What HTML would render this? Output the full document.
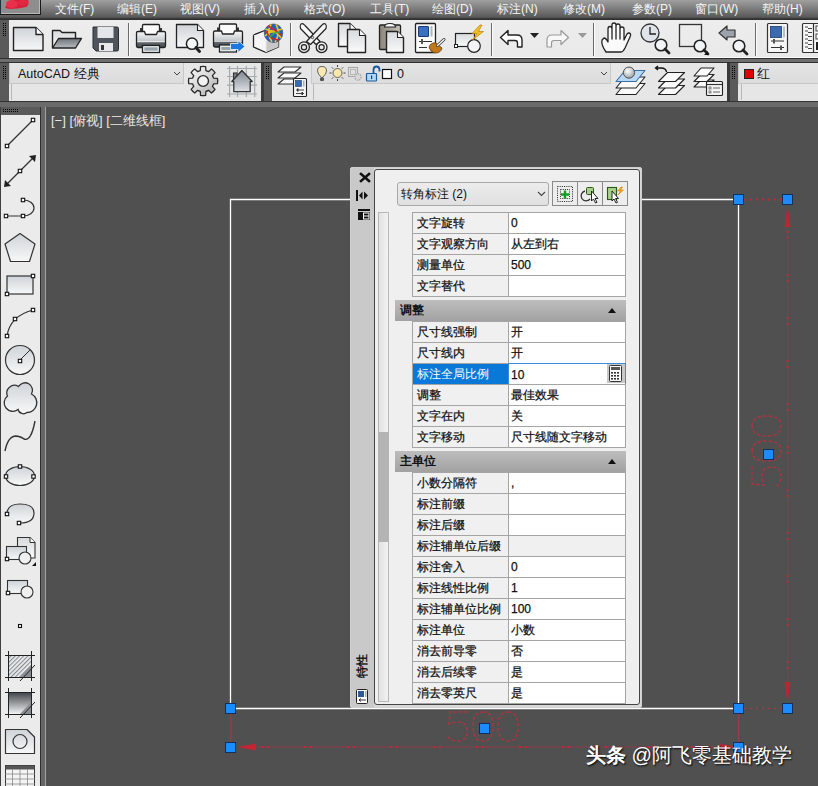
<!DOCTYPE html>
<html><head><meta charset="utf-8">
<style>
*{margin:0;padding:0;box-sizing:border-box}
html,body{width:818px;height:786px;overflow:hidden;background:#505050;font-family:"Liberation Sans",sans-serif;position:relative}
.a{position:absolute}
#menubar{left:0;top:0;width:818px;height:20px;background:linear-gradient(#a0a0a0,#5a5a5a 85%,#303030 95%,#303030)}
.mi{position:absolute;top:1px;color:#f4f4f4;font-size:12px;line-height:16px;white-space:nowrap}
#logo{left:0;top:0;width:41px;height:15px;border-right:1px solid #2a2a2a;border-bottom:1px solid #2a2a2a;background:linear-gradient(90deg,#5a6a70,#8a8a8a 60%,#7a7a7a)}
#tb1{left:0;top:20px;width:818px;height:38px;background:linear-gradient(#ededed,#e9e9e9);border-bottom:1px solid #fafafa}
#sep1{left:0;top:58px;width:818px;height:5px;background:#6e6e6e;border-top:1px solid #303030;border-bottom:1px solid #303030}
#tb2{left:0;top:63px;width:818px;height:38px;background:#e6e6e6}
#band{left:0;top:101px;width:818px;height:6px;background:#6a6a6a;border-top:1px solid #333}
.grip{position:absolute;background:#4a4a4a;background-image:radial-gradient(circle,#111 0.8px,transparent 1.1px);background-size:3px 3px}
.gap{position:absolute;background:#3a3a3a}
#lefttb{left:0;top:107px;width:41px;height:679px;background:#ebebeb;border-right:1px solid #2e2e2e;border-left:1px solid #404040}
#leftgrip{left:0;top:107px;width:41px;height:8px;background:#505050}
#canvasborder{left:41px;top:101px;width:777px;height:685px;background:#666}
#canvas{left:45px;top:106px;width:773px;height:680px;background:#505050;border-left:1px solid #a0a0a0;border-top:1px solid #a0a0a0}
#vlabel{left:51px;top:112px;color:#e8e8e8;font-size:13px;line-height:17px;white-space:nowrap}
.combo{position:absolute;height:21px;background:linear-gradient(#e4e4e4,#dcdcdc);border:1px solid #c8c8c8;border-top:none}
.combo2{position:absolute;height:16px;border-left:1px solid #b8b8b8;background:#e6e6e6}
.ctext{position:absolute;font-size:12.5px;line-height:16px;color:#111;white-space:nowrap}
/* panel */
#panel{left:350px;top:167px;width:292px;height:541px;background:#d8d8d8;border:1px solid #d0d0d0;border-radius:2px}
#pstrip{left:351px;top:168px;width:23px;height:539px;background:#c9c9c9;border-radius:3px 0 0 3px}
#pinner{left:374px;top:169px;width:266px;height:536px;background:#efefef;border:1px solid #444;border-radius:3px}
#combo{left:397px;top:182px;width:152px;height:24px;border:1px solid #a8a8a8;border-radius:3px;background:linear-gradient(#ececec,#e0e0e0);font-size:12px;line-height:22px;padding-left:3px;color:#111}
#btns{left:552px;top:181px;width:76px;height:25px;border:1px solid #9a9a9a;background:#ececec}
#scroll{left:378px;top:212px;width:11px;height:490px;background:linear-gradient(90deg,#e2e2e2,#f2f2f2);border:1px solid #b8b8b8}
#thumb{left:378px;top:432px;width:11px;height:110px;background:#b4b4b4}
#tbl{left:0;top:0;width:818px;height:704px;overflow:hidden}
.row{position:absolute;left:412px;width:214px;height:21px;border-top:1px solid #a5a5a5;border-left:1px solid #a5a5a5;border-right:1px solid #a5a5a5}
.rb{position:absolute;left:412px;width:214px;height:1px;background:#a5a5a5}
.k{position:absolute;left:0;top:0;width:96px;height:20px;background:#f0f0f0;border-right:1px solid #a5a5a5;font-size:12px;line-height:20px;padding-left:4px;color:#111;white-space:nowrap;-webkit-text-stroke:0.25px #111}
.v{position:absolute;left:96px;top:0;width:116px;height:20px;background:#fff;font-size:12px;line-height:20px;padding-left:2px;color:#111;white-space:nowrap;-webkit-text-stroke:0.25px #111}
.sel .k{background:#0a78d7;color:#fff;-webkit-text-stroke:0}
.sel .v{border:1px solid #3c8ad8;left:95px;width:118px;top:-1px;height:22px;line-height:23px;padding-left:2px}
.dis .v{background:#f0f0f0}
.hdr{position:absolute;left:395px;width:231px;height:21px;background:linear-gradient(#bdbdbd,#a2a2a2);font-size:12px;font-weight:bold;line-height:21px;padding-left:5px;color:#111}
.hdr:after{content:"";position:absolute;right:10px;top:8px;border-left:4px solid transparent;border-right:4px solid transparent;border-bottom:5px solid #111}
#wm{left:586px;top:742px;color:#fff;font-size:20.2px;line-height:26px;white-space:nowrap;text-shadow:1px 1px 2px #000}
</style></head><body>
<div id="canvasborder" class="a"></div>
<div id="canvas" class="a"></div>
<div id="vlabel" class="a">[−] [俯视] [二维线框]</div>


<div id="menubar" class="a"></div>
<div class="mi" style="left:55px">文件(F)</div>
<div class="mi" style="left:117px">编辑(E)</div>
<div class="mi" style="left:180px">视图(V)</div>
<div class="mi" style="left:244px">插入(I)</div>
<div class="mi" style="left:304px">格式(O)</div>
<div class="mi" style="left:370px">工具(T)</div>
<div class="mi" style="left:432px">绘图(D)</div>
<div class="mi" style="left:497px">标注(N)</div>
<div class="mi" style="left:563px">修改(M)</div>
<div class="mi" style="left:632px">参数(P)</div>
<div class="mi" style="left:695px">窗口(W)</div>
<div class="mi" style="left:762px">帮助(H)</div>

<div id="tb1" class="a"></div>
<div id="sep1" class="a"></div>
<div id="tb2" class="a"></div>
<div class="gap" style="left:261px;top:63px;width:3px;height:38px"></div>
<div class="gap" style="left:727px;top:63px;width:3px;height:38px"></div>
<div class="combo" style="left:9px;top:63px;width:175px"></div>
<div class="combo2" style="left:11px;top:84px;width:173px"></div>
<div class="ctext" style="left:18px;top:66px">AutoCAD 经典</div>
<div class="combo" style="left:311px;top:63px;width:300px"></div>
<div class="combo2" style="left:313px;top:84px;width:298px"></div>
<div class="ctext" style="left:397px;top:66px">0</div>
<div class="combo" style="left:738px;top:63px;width:81px"></div>
<div class="combo2" style="left:741px;top:84px;width:77px"></div>
<div class="ctext" style="left:757px;top:66px">红</div>
<div id="band" class="a"></div>
<div id="lefttb" class="a"></div>
<svg class="a" style="left:0;top:0" width="818" height="786" viewBox="0 0 818 786">
<defs>
<linearGradient id="gPage" x1="0" y1="0" x2="0" y2="1"><stop offset="0" stop-color="#cfd3d8"/><stop offset="1" stop-color="#f8f8f8"/></linearGradient>
<linearGradient id="gPage2" x1="0" y1="0" x2="0" y2="1"><stop offset="0" stop-color="#d8dadd"/><stop offset="1" stop-color="#fafafa"/></linearGradient>
<linearGradient id="gFold" x1="0" y1="0" x2="0" y2="1"><stop offset="0" stop-color="#6f747a"/><stop offset="1" stop-color="#b9bcc0"/></linearGradient>
<linearGradient id="gPrn" x1="0" y1="0" x2="0" y2="1"><stop offset="0" stop-color="#f8f8f8"/><stop offset="0.6" stop-color="#c4c8cc"/><stop offset="0.64" stop-color="#fafafa"/><stop offset="0.7" stop-color="#60656c"/><stop offset="1" stop-color="#484c54"/></linearGradient>
<linearGradient id="gHouse" x1="0" y1="0" x2="0" y2="1"><stop offset="0" stop-color="#7e858e"/><stop offset="1" stop-color="#dde0e4"/></linearGradient>
<linearGradient id="gGear" x1="0" y1="0" x2="1" y2="1"><stop offset="0" stop-color="#fcfcfc"/><stop offset="0.5" stop-color="#d8d8d8"/><stop offset="1" stop-color="#a8a8a8"/></linearGradient>
<linearGradient id="gGrad" x1="0" y1="0" x2="0" y2="1"><stop offset="0" stop-color="#3c4046"/><stop offset="1" stop-color="#f4f4f4"/></linearGradient>
<linearGradient id="gClip" x1="0" y1="0" x2="1" y2="0"><stop offset="0" stop-color="#8a8478"/><stop offset="1" stop-color="#c8c4bc"/></linearGradient>
<radialGradient id="gGlobe" cx="0.4" cy="0.4" r="0.6"><stop offset="0" stop-color="#f0d040"/><stop offset="0.5" stop-color="#30a040"/><stop offset="1" stop-color="#2050c0"/></radialGradient>
<radialGradient id="gBall" cx="0.4" cy="0.35" r="0.6"><stop offset="0" stop-color="#ffffff"/><stop offset="1" stop-color="#a8acb0"/></radialGradient>
<pattern id="hatch" width="3" height="3" patternUnits="userSpaceOnUse" patternTransform="rotate(45)"><rect width="3" height="3" fill="#f0f0f0"/><rect width="1.2" height="3" fill="#8a8e94"/></pattern>
</defs>
<rect x="0" y="20" width="9" height="38" fill="#5a5a5a"/>
<rect x="3" y="23" width="1" height="1" fill="#050505"/>
<rect x="3" y="25" width="1" height="1" fill="#050505"/>
<rect x="3" y="27" width="1" height="1" fill="#050505"/>
<rect x="3" y="29" width="1" height="1" fill="#050505"/>
<rect x="3" y="31" width="1" height="1" fill="#050505"/>
<rect x="3" y="33" width="1" height="1" fill="#050505"/>
<rect x="3" y="35" width="1" height="1" fill="#050505"/>
<rect x="5" y="23" width="1" height="1" fill="#050505"/>
<rect x="5" y="25" width="1" height="1" fill="#050505"/>
<rect x="5" y="27" width="1" height="1" fill="#050505"/>
<rect x="5" y="29" width="1" height="1" fill="#050505"/>
<rect x="5" y="31" width="1" height="1" fill="#050505"/>
<rect x="5" y="33" width="1" height="1" fill="#050505"/>
<rect x="5" y="35" width="1" height="1" fill="#050505"/>
<rect x="0" y="63" width="9" height="38" fill="#5a5a5a"/>
<rect x="3" y="66" width="1" height="1" fill="#050505"/>
<rect x="3" y="68" width="1" height="1" fill="#050505"/>
<rect x="3" y="70" width="1" height="1" fill="#050505"/>
<rect x="3" y="72" width="1" height="1" fill="#050505"/>
<rect x="3" y="74" width="1" height="1" fill="#050505"/>
<rect x="3" y="76" width="1" height="1" fill="#050505"/>
<rect x="3" y="78" width="1" height="1" fill="#050505"/>
<rect x="5" y="66" width="1" height="1" fill="#050505"/>
<rect x="5" y="68" width="1" height="1" fill="#050505"/>
<rect x="5" y="70" width="1" height="1" fill="#050505"/>
<rect x="5" y="72" width="1" height="1" fill="#050505"/>
<rect x="5" y="74" width="1" height="1" fill="#050505"/>
<rect x="5" y="76" width="1" height="1" fill="#050505"/>
<rect x="5" y="78" width="1" height="1" fill="#050505"/>
<rect x="264" y="63" width="8" height="38" fill="#5a5a5a"/>
<rect x="266" y="66" width="1" height="1" fill="#050505"/>
<rect x="266" y="68" width="1" height="1" fill="#050505"/>
<rect x="266" y="70" width="1" height="1" fill="#050505"/>
<rect x="266" y="72" width="1" height="1" fill="#050505"/>
<rect x="266" y="74" width="1" height="1" fill="#050505"/>
<rect x="266" y="76" width="1" height="1" fill="#050505"/>
<rect x="266" y="78" width="1" height="1" fill="#050505"/>
<rect x="268" y="66" width="1" height="1" fill="#050505"/>
<rect x="268" y="68" width="1" height="1" fill="#050505"/>
<rect x="268" y="70" width="1" height="1" fill="#050505"/>
<rect x="268" y="72" width="1" height="1" fill="#050505"/>
<rect x="268" y="74" width="1" height="1" fill="#050505"/>
<rect x="268" y="76" width="1" height="1" fill="#050505"/>
<rect x="268" y="78" width="1" height="1" fill="#050505"/>
<rect x="730" y="63" width="8" height="38" fill="#5a5a5a"/>
<rect x="732" y="66" width="1" height="1" fill="#050505"/>
<rect x="732" y="68" width="1" height="1" fill="#050505"/>
<rect x="732" y="70" width="1" height="1" fill="#050505"/>
<rect x="732" y="72" width="1" height="1" fill="#050505"/>
<rect x="732" y="74" width="1" height="1" fill="#050505"/>
<rect x="732" y="76" width="1" height="1" fill="#050505"/>
<rect x="732" y="78" width="1" height="1" fill="#050505"/>
<rect x="734" y="66" width="1" height="1" fill="#050505"/>
<rect x="734" y="68" width="1" height="1" fill="#050505"/>
<rect x="734" y="70" width="1" height="1" fill="#050505"/>
<rect x="734" y="72" width="1" height="1" fill="#050505"/>
<rect x="734" y="74" width="1" height="1" fill="#050505"/>
<rect x="734" y="76" width="1" height="1" fill="#050505"/>
<rect x="734" y="78" width="1" height="1" fill="#050505"/>
<rect x="1" y="107" width="39" height="8" fill="#5a5a5a"/>
<rect x="3" y="109" width="1" height="1" fill="#050505"/>
<rect x="3" y="111" width="1" height="1" fill="#050505"/>
<rect x="5" y="109" width="1" height="1" fill="#050505"/>
<rect x="5" y="111" width="1" height="1" fill="#050505"/>
<rect x="7" y="109" width="1" height="1" fill="#050505"/>
<rect x="7" y="111" width="1" height="1" fill="#050505"/>
<rect x="9" y="109" width="1" height="1" fill="#050505"/>
<rect x="9" y="111" width="1" height="1" fill="#050505"/>
<rect x="11" y="109" width="1" height="1" fill="#050505"/>
<rect x="11" y="111" width="1" height="1" fill="#050505"/>
<rect x="13" y="109" width="1" height="1" fill="#050505"/>
<rect x="13" y="111" width="1" height="1" fill="#050505"/>
<rect x="15" y="109" width="1" height="1" fill="#050505"/>
<rect x="15" y="111" width="1" height="1" fill="#050505"/>
<rect x="17" y="109" width="1" height="1" fill="#050505"/>
<rect x="17" y="111" width="1" height="1" fill="#050505"/>
<rect x="0" y="0" width="41" height="15" fill="#1a1a1a"/><rect x="0" y="0" width="40" height="14" fill="#b8b8b8"/><rect x="1" y="0" width="38" height="13" fill="#8e8e8e"/>
<path d="M5,8 Q7,2 14,0 H28 Q30,4 26,7 Q18,9 10,9 Z" fill="#d8203a"/><ellipse cx="12" cy="4" rx="6" ry="4" fill="#e8304a"/><ellipse cx="23" cy="2.5" rx="5" ry="3" fill="#e02840"/>
<rect x="0" y="0" width="1" height="14" fill="#203040"/>
<rect x="128" y="23" width="1" height="33" fill="#6a6a6a"/><rect x="129" y="23" width="1" height="33" fill="#fcfcfc"/>
<rect x="290" y="23" width="1" height="33" fill="#6a6a6a"/><rect x="291" y="23" width="1" height="33" fill="#fcfcfc"/>
<rect x="491" y="23" width="1" height="33" fill="#6a6a6a"/><rect x="492" y="23" width="1" height="33" fill="#fcfcfc"/>
<rect x="593" y="23" width="1" height="33" fill="#6a6a6a"/><rect x="594" y="23" width="1" height="33" fill="#fcfcfc"/>
<rect x="755" y="23" width="1" height="33" fill="#6a6a6a"/><rect x="756" y="23" width="1" height="33" fill="#fcfcfc"/>
<path d="M13.5,27.5 H36 L43,34.5 V50.5 H13.5 Z" fill="url(#gPage)" stroke="#222" stroke-width="1.4" stroke-linejoin="round"/>
<path d="M36,27.5 V34.5 H43" fill="#fff" stroke="#222" stroke-width="1.4" stroke-linejoin="round"/>
<path d="M52.5,48 V30.5 H60 L62,32.5 H75.5 V40" fill="url(#gPage2)" stroke="#222" stroke-width="1.4" stroke-linejoin="round"/>
<path d="M52.5,48 L58.5,38.5 H81.5 L75.5,48 Z" fill="url(#gFold)" stroke="#222" stroke-width="1.4" stroke-linejoin="round"/>
<path d="M93,27 H117 Q118.5,27 118.5,28.5 V49.5 Q118.5,51 117,51 H96 L93,48 Z" fill="#50545c" stroke="#2a2d33" stroke-width="1"/>
<rect x="97.5" y="27" width="16" height="11" fill="#e4e6ea"/>
<rect x="99" y="43" width="14" height="8" fill="#e8e8ea"/><rect x="101" y="45" width="3" height="5" fill="#333"/>
<rect x="142.5" y="24.5" width="17" height="11" rx="1" fill="#fbfbfb" stroke="#222" stroke-width="1.3"/>
<rect x="140" y="28" width="2.5" height="4" fill="#333"/><rect x="159.5" y="28" width="2.5" height="4" fill="#333"/>
<path d="M136.5,33 Q136.5,31.5 138,31.5 H144.5 L145.5,34.5 H156.5 L157.5,31.5 H164 Q165.5,31.5 165.5,33 V46 Q165.5,47.5 164,47.5 H138 Q136.5,47.5 136.5,46 Z" fill="url(#gPrn)" stroke="#222" stroke-width="1.3" stroke-linejoin="round"/>
<rect x="142.5" y="45.5" width="17" height="7" fill="#9aa4ac" stroke="#222" stroke-width="1.3"/><rect x="143.8" y="46.8" width="14.4" height="4.4" fill="none" stroke="#f4f8fa" stroke-width="1"/>
<path d="M176.5,24.5 H197.5 L203.5,30.5 V47.5 H176.5 Z" fill="url(#gPage)" stroke="#222" stroke-width="1.3" stroke-linejoin="round"/>
<path d="M197.5,24.5 V30.5 H203.5" fill="#f4f4f4" stroke="#222" stroke-width="1.1"/>
<circle cx="192" cy="43.7" r="5.6" fill="#f6f8f8" stroke="#222" stroke-width="1.5"/><path d="M196,47.7 L199.5,51.5" stroke="#222" stroke-width="3" stroke-linecap="round"/>
<rect x="219.5" y="24.0" width="17" height="11" rx="1" fill="#fbfbfb" stroke="#222" stroke-width="1.3"/>
<rect x="217" y="27.5" width="2.5" height="4" fill="#333"/><rect x="236.5" y="27.5" width="2.5" height="4" fill="#333"/>
<path d="M213.5,32.5 Q213.5,31.0 215,31.0 H221.5 L222.5,34.0 H233.5 L234.5,31.0 H241 Q242.5,31.0 242.5,32.5 V45.5 Q242.5,47.0 241,47.0 H215 Q213.5,47.0 213.5,45.5 Z" fill="url(#gPrn)" stroke="#222" stroke-width="1.3" stroke-linejoin="round"/>
<rect x="219.5" y="45.0" width="17" height="7" fill="#9aa4ac" stroke="#222" stroke-width="1.3"/><rect x="220.8" y="46.3" width="14.4" height="4.4" fill="none" stroke="#f4f8fa" stroke-width="1"/>
<path d="M230.5,43.5 H238 V40.5 L245,46.5 L238,52.5 V49.5 H230.5 Z" fill="#1a78e0" stroke="#f4f8ff" stroke-width="0.8"/>
<path d="M253.5,35 L266,30 L278.5,35 V47 L266,52.5 L253.5,47 Z" fill="#f6f6f6" stroke="#222" stroke-width="1.3" stroke-linejoin="round"/><path d="M266,41 V52 L278.5,47 V35 Z" fill="#c8c8c8"/><path d="M253.5,35 L266,41 V52.5 M266,41 L278.5,35" fill="none" stroke="#eee" stroke-width="0.8"/>
<circle cx="273.5" cy="33.2" r="9.3" fill="#1e60c8" stroke="#3a4a60" stroke-width="0.6"/>
<path d="M265.5,29 Q272,33 282,29 M265,36 Q274,27 281,38 M271,24.5 Q266,33 272,42 M276,24.5 Q281,33 275,42" fill="none" stroke="#e8c020" stroke-width="1.7"/>
<path d="M266,31 Q270,40 279,40 M268,26 Q276,30 281,35" fill="none" stroke="#d02828" stroke-width="1.5"/><path d="M270,37 Q274,32 280,32" fill="none" stroke="#30b040" stroke-width="1.4"/>
<path d="M301,24 Q303,23 305,25.5 L320,41.5 L316,44.5 L300.5,28.5 Q299.5,26 301,24 Z" fill="#fafafa" stroke="#222" stroke-width="1.2" stroke-linejoin="round"/>
<path d="M325.5,24 Q323.5,23 321.5,25.5 L306.5,41.5 L310.5,44.5 L326,28.5 Q327,26 325.5,24 Z" fill="#f2f2f2" stroke="#222" stroke-width="1.2" stroke-linejoin="round"/>
<circle cx="304" cy="47.2" r="5.4" fill="#f0f0f0" stroke="#222" stroke-width="1.3"/><circle cx="304" cy="47.2" r="2.6" fill="#e8e8e8" stroke="#222" stroke-width="1.2"/>
<circle cx="321.6" cy="47.2" r="5.4" fill="#f0f0f0" stroke="#222" stroke-width="1.3"/><circle cx="321.6" cy="47.2" r="2.6" fill="#e8e8e8" stroke="#222" stroke-width="1.2"/>
<circle cx="312.5" cy="37.5" r="1.2" fill="none" stroke="#333" stroke-width="0.9"/>
<path d="M338.5,23.5 H350 L356,29.5 V46.5 H338.5 Z" fill="url(#gPage2)" stroke="#222" stroke-width="1.4" stroke-linejoin="round"/>
<path d="M350,23.5 V29.5 H356" fill="#fff" stroke="#222" stroke-width="1.1"/>
<path d="M347.5,29.5 H359.5 L365.5,35.5 V52.5 H347.5 Z" fill="url(#gPage2)" stroke="#222" stroke-width="1.4" stroke-linejoin="round"/>
<path d="M359.5,29.5 V35.5 H365.5" fill="#fff" stroke="#222" stroke-width="1.1"/>
<rect x="379.5" y="25" width="21" height="24.5" rx="1" fill="url(#gClip)" stroke="#222" stroke-width="1.3"/>
<path d="M384.5,27 Q384.5,23.5 390,23.5 Q395.5,23.5 395.5,27 Z" fill="#fafafa" stroke="#222" stroke-width="1.1"/>
<path d="M386.5,31.5 H397.5 L403.5,37.5 V52.5 H386.5 Z" fill="url(#gPage2)" stroke="#222" stroke-width="1.4" stroke-linejoin="round"/>
<path d="M397.5,31.5 V37.5 H403.5" fill="#fff" stroke="#222" stroke-width="1.1"/>
<rect x="415.5" y="23.5" width="20" height="29" rx="1" fill="#fbfbfb" stroke="#222" stroke-width="1.3"/>
<rect x="418.5" y="26.5" width="10" height="10" rx="0.5" fill="#3a70c0" stroke="#1a3a78" stroke-width="1"/><rect x="430.5" y="26" width="2" height="10.5" fill="#b0b6c0"/>
<path d="M419,41.5 H432 M419,47.5 H427" stroke="#333" stroke-width="1.2"/><rect x="421" y="39" width="2" height="5" fill="#555"/>
<path d="M429,47 Q431,42 436,43 L442,48 Q441,53 435,53 Q430,52 429,47 Z" fill="#c07818" stroke="#6a4010" stroke-width="0.8"/><path d="M437.5,45.5 L444,39.5" stroke="#333" stroke-width="3" stroke-linecap="round"/><path d="M437.5,45.5 L444,39.5" stroke="#fafafa" stroke-width="1.4" stroke-linecap="round"/>
<rect x="455.5" y="33.5" width="19" height="13" fill="url(#gPage2)" stroke="#222" stroke-width="1.2"/><rect x="454.5" y="44.5" width="3" height="3" fill="#fff" stroke="#222" stroke-width="1"/>
<circle cx="474" cy="46" r="6.3" fill="#f4f4f6" stroke="#222" stroke-width="1.2"/>
<path d="M480,25 L472,33.5 H477 L472.5,40 L483.5,31.5 H478.5 L482,25 Z" fill="#f0c020" stroke="#c08010" stroke-width="0.7" stroke-linejoin="round"/>
<path d="M508,30.5 L500.5,37.5 L508,44.5 V40.5 H515 Q517.5,40.5 517.5,43 V47 H522 V40 Q522,35 517,35 H508 Z" fill="#fff" stroke="#222" stroke-width="1.4" stroke-linejoin="round"/>
<path d="M530,33 H539 L534.5,38 Z" fill="#222"/>
<path d="M561,30.5 L568.5,37.5 L561,44.5 V40.5 H554 Q551.5,40.5 551.5,43 V47 H547 V40 Q547,35 552,35 H561 Z" fill="#f8f8f8" stroke="#9a9a9a" stroke-width="1.2" stroke-linejoin="round"/>
<path d="M578,33 H587 L582.5,38 Z" fill="#9a9a9a"/>
<path d="M606,52 Q601,45 602,40 L604,38 Q606,38 608,42 V29 Q608,26.5 610,26.5 Q612,26.5 612,29 V39 V25 Q612,23 614,23 Q616,23 616,25 V39 V26 Q616,24 618,24 Q620,24 620,26 V39 V29 Q620,27 622,27 Q624,27 624,29 V40 L627,34 Q629,32 630.5,34 Q631,35 630,37 L625,48 Q623,52 621,52 Z" fill="#fafafa" stroke="#222" stroke-width="1.3" stroke-linejoin="round"/>
<circle cx="650" cy="33" r="9" fill="#dfe3ea" stroke="#333" stroke-width="1.3"/><path d="M650,27 V34 H656" fill="none" stroke="#222" stroke-width="1.3"/>
<circle cx="661" cy="45" r="5.8" fill="#f2f4f6" stroke="#222" stroke-width="1.6"/><path d="M665,49 L669,53" stroke="#222" stroke-width="2.8" stroke-linecap="round"/>
<rect x="679.5" y="24.5" width="22" height="22" fill="none" stroke="#333" stroke-width="1.3"/>
<circle cx="700" cy="46" r="5.8" fill="#f2f4f6" stroke="#222" stroke-width="1.6"/><path d="M704,50 L708,54" stroke="#222" stroke-width="2.8" stroke-linecap="round"/>
<path d="M708,51 V55 H704 Z" fill="#111"/>
<path d="M719,33 L727,26 V30 H735 V37 H727 V40 Z" fill="#9ca2ac" stroke="#333" stroke-width="1.2" stroke-linejoin="round"/>
<circle cx="739" cy="46" r="5.8" fill="#f2f4f6" stroke="#222" stroke-width="1.6"/><path d="M743,50 L747,54" stroke="#222" stroke-width="2.8" stroke-linecap="round"/>
<rect x="767.5" y="23.5" width="20" height="29" rx="1" fill="#f6f6f6" stroke="#333" stroke-width="1.2"/>
<rect x="770.5" y="26.5" width="11" height="11" fill="#3a6ab0" stroke="#1a3a70" stroke-width="0.8"/><rect x="783" y="26.5" width="2" height="11" fill="#b8bcc4"/>
<path d="M771,41 H784 M771,47.5 H784" stroke="#333" stroke-width="1"/><rect x="773" y="39" width="2" height="4.5" fill="#555"/><rect x="780" y="45.5" width="2" height="4.5" fill="#555"/>
<rect x="802.5" y="23.5" width="20" height="29" rx="1" fill="#f6f6f6" stroke="#333" stroke-width="1.2"/><path d="M813.5,23.5 V52.5" stroke="#333" stroke-width="1.2"/>
<path d="M805,27 H808 M808,28.5 H812" stroke="#444" stroke-width="1"/>
<path d="M805,31 H808 M808,32.5 H812" stroke="#444" stroke-width="1"/>
<path d="M805,35 H808 M808,36.5 H812" stroke="#444" stroke-width="1"/>
<path d="M805,39 H808 M808,40.5 H812" stroke="#444" stroke-width="1"/>
<path d="M805,43 H808 M808,44.5 H812" stroke="#444" stroke-width="1"/>
<path d="M805,47 H808 M808,48.5 H812" stroke="#444" stroke-width="1"/>
<rect x="816" y="26" width="4" height="5" fill="none" stroke="#444" stroke-width="1"/><rect x="816" y="34" width="4" height="5" fill="none" stroke="#444" stroke-width="1"/><rect x="816" y="42" width="4" height="8" fill="#222"/>
<path d="M174,72 L177,75 L180,72" fill="none" stroke="#444" stroke-width="1"/>
<path d="M200.30,70.57 L200.56,66.62 A14.6,14.6 0 0 1 205.64,66.62 L205.90,70.57 A10.8,10.8 0 0 1 208.50,71.65 L211.47,69.04 A14.6,14.6 0 0 1 215.06,72.63 L212.45,75.60 A10.8,10.8 0 0 1 213.53,78.20 L217.48,78.46 A14.6,14.6 0 0 1 217.48,83.54 L213.53,83.80 A10.8,10.8 0 0 1 212.45,86.40 L215.06,89.37 A14.6,14.6 0 0 1 211.47,92.96 L208.50,90.35 A10.8,10.8 0 0 1 205.90,91.43 L205.64,95.38 A14.6,14.6 0 0 1 200.56,95.38 L200.30,91.43 A10.8,10.8 0 0 1 197.70,90.35 L194.73,92.96 A14.6,14.6 0 0 1 191.14,89.37 L193.75,86.40 A10.8,10.8 0 0 1 192.67,83.80 L188.72,83.54 A14.6,14.6 0 0 1 188.72,78.46 L192.67,78.20 A10.8,10.8 0 0 1 193.75,75.60 L191.14,72.63 A14.6,14.6 0 0 1 194.73,69.04 L197.70,71.65 A10.8,10.8 0 0 1 200.30,70.57 Z" fill="url(#gGear)" stroke="#2a2a2a" stroke-width="1.3" stroke-linejoin="round"/>
<circle cx="203.1" cy="81" r="5.4" fill="#f2f2f2" stroke="#2a2a2a" stroke-width="1.4"/>
<path d="M227,68.5 H257 M227,76.5 H257 M227,85.2 H257 M227,94 H257 M229.6,66 V97 M237.5,66 V97 M246.3,66 V97 M254.7,66 V97" stroke="#a4aab0" stroke-width="1.2"/>
<rect x="233.5" y="73" width="3.5" height="7" fill="#7a8088" stroke="#333" stroke-width="1.1"/>
<path d="M233.8,91.7 V81.5 H231.8 L241.9,70.5 L252.2,81.5 H250.2 V91.7 Z" fill="url(#gHouse)" stroke="#333" stroke-width="1.3" stroke-linejoin="round"/>
<path d="M284,67 H301 L295,72 H278 Z" fill="#fafafa" stroke="#333" stroke-width="1.1" stroke-linejoin="round"/>
<path d="M284,73 H301 L295,78 H278 Z" fill="#fafafa" stroke="#333" stroke-width="1.1" stroke-linejoin="round"/>
<path d="M284,79 H301 L295,84 H278 Z" fill="#fafafa" stroke="#333" stroke-width="1.1" stroke-linejoin="round"/>
<rect x="293.5" y="78.5" width="13" height="18" rx="1" fill="#f6f6f6" stroke="#222" stroke-width="1.1"/><rect x="295.5" y="80.5" width="6" height="6" fill="#3a6ab0" stroke="#1a3a70" stroke-width="0.6"/><rect x="303" y="80.5" width="1.5" height="6" fill="#aab"/><path d="M296,90 H304 M296,93.5 H304" stroke="#333" stroke-width="0.9"/><rect x="297" y="88.5" width="1.5" height="3" fill="#333"/><rect x="301.5" y="92" width="1.5" height="3" fill="#333"/>
<path d="M322,78 Q317.5,74 317.5,71 Q317.5,66.5 322,66.5 Q326.5,66.5 326.5,71 Q326.5,74 322,78 Z" fill="#faeab0" stroke="#555" stroke-width="0.9"/><rect x="320" y="77.5" width="4" height="3.5" rx="1" fill="#555"/>
<circle cx="337.5" cy="73" r="4.5" fill="#f8e8a8" stroke="#555" stroke-width="0.9"/><path d="M337.5,65 V67 M337.5,79 V81 M329.5,73 H331.5 M343.5,73 H345.5 M331.8,67.3 L333.2,68.7 M341.8,77.3 L343.2,78.7 M343.2,67.3 L341.8,68.7 M333.2,77.3 L331.8,78.7" stroke="#444" stroke-width="1"/>
<rect x="348.5" y="67.5" width="9" height="9" fill="none" stroke="#a8a8a8" stroke-width="1.1"/><rect x="350.5" y="69.5" width="5" height="5" fill="none" stroke="#b8b8b8" stroke-width="1"/><circle cx="358" cy="77" r="3.2" fill="#d8d8d8" stroke="#b0b0b0" stroke-width="1.6" stroke-dasharray="1.4 1"/>
<rect x="366.5" y="73.5" width="10" height="7.5" rx="0.8" fill="#b0d8f8" stroke="#1a5a9a" stroke-width="1.2"/><path d="M373.5,73 V70 Q373.5,66.5 376.5,66.5 Q379.5,66.5 379.5,70 V71.5" fill="none" stroke="#1a5a9a" stroke-width="1.8"/><rect x="371" y="75.5" width="1.2" height="3.5" fill="#1a3a6a"/>
<rect x="382.5" y="69.5" width="9" height="9" fill="#fff" stroke="#111" stroke-width="1.2"/>
<path d="M601,72 L604,75 L607,72" fill="none" stroke="#444" stroke-width="1"/>
<path d="M616,94.5 H636 L645,83.5 H625 Z" fill="#fafafa" stroke="#222" stroke-width="1.1" stroke-linejoin="round"/>
<path d="M616,88 H636 L645,77 H625 Z" fill="#fafafa" stroke="#222" stroke-width="1.1" stroke-linejoin="round"/>
<path d="M616,81.5 H636 L645,70.5 H625 Z" fill="#b8d8f4" stroke="#3a70a8" stroke-width="1.1" stroke-linejoin="round"/>
<circle cx="629" cy="72.6" r="5.6" fill="url(#gBall)" stroke="#444" stroke-width="0.9"/>
<path d="M658.5,94.5 H675.5 L684.5,85.5 H667.5 Z" fill="#fafafa" stroke="#222" stroke-width="1.1" stroke-linejoin="round"/>
<path d="M658.5,88 H675.5 L684.5,79 H667.5 Z" fill="#fafafa" stroke="#222" stroke-width="1.1" stroke-linejoin="round"/>
<path d="M658.5,81.5 H675.5 L684.5,72.5 H667.5 Z" fill="#fafafa" stroke="#222" stroke-width="1.1" stroke-linejoin="round"/>
<path d="M666.5,72 Q666,68 661,68 H656 M658,66 L655.5,68 L658,70" fill="none" stroke="#111" stroke-width="1.3"/>
<path d="M694,87 H707 L714,80 H701 Z" fill="#fafafa" stroke="#222" stroke-width="1.1" stroke-linejoin="round"/>
<path d="M694,81.5 H707 L714,74.5 H701 Z" fill="#fafafa" stroke="#222" stroke-width="1.1" stroke-linejoin="round"/>
<path d="M694,76 H707 L714,68 H701 Z" fill="#fafafa" stroke="#222" stroke-width="1.1" stroke-linejoin="round"/>
<rect x="706.5" y="81.5" width="16" height="14" rx="1" fill="#f4f4f4" stroke="#222" stroke-width="1.1"/><path d="M707,84.5 H722" stroke="#333" stroke-width="1.1"/><rect x="709" y="87" width="2" height="2" fill="none" stroke="#555" stroke-width="0.7"/><rect x="709" y="91" width="2" height="2" fill="none" stroke="#555" stroke-width="0.7"/><path d="M713,88 H720 M713,92 H720" stroke="#555" stroke-width="0.9"/>
<rect x="744.5" y="69.5" width="9" height="9" fill="#e00000" stroke="#222" stroke-width="1"/><path d="M7,146 L33,120" stroke="#333" stroke-width="1.2" fill="none"/>
<rect x="5.3" y="144.3" width="3.4" height="3.4" fill="#fff" stroke="#111" stroke-width="1.1"/>
<rect x="31.3" y="118.3" width="3.4" height="3.4" fill="#fff" stroke="#111" stroke-width="1.1"/>
<path d="M6,185 L34,157" stroke="#333" stroke-width="1.2" fill="none"/>
<path d="M4,187 L5,180 L11,186 Z M36,155 L35,162 L29,156 Z" fill="#222"/>
<rect x="18.3" y="169.3" width="3.4" height="3.4" fill="#fff" stroke="#111" stroke-width="1.1"/>
<path d="M6,216 H23 A11,8 0 0 0 23,200" stroke="#333" stroke-width="1.2" fill="none"/>
<rect x="4.3" y="214.3" width="3.4" height="3.4" fill="#fff" stroke="#111" stroke-width="1.1"/>
<rect x="21.3" y="214.3" width="3.4" height="3.4" fill="#fff" stroke="#111" stroke-width="1.1"/>
<rect x="21.3" y="198.3" width="3.4" height="3.4" fill="#fff" stroke="#111" stroke-width="1.1"/>
<path d="M20,233.5 L35,244 L29.5,261.5 H10.5 L5,244 Z" fill="url(#gPage)" stroke="#333" stroke-width="1.2" stroke-linejoin="round"/>
<rect x="7" y="276" width="26" height="18" fill="url(#gPage)" stroke="#333" stroke-width="1.2"/>
<rect x="31.3" y="274.3" width="3.4" height="3.4" fill="#fff" stroke="#111" stroke-width="1.1"/>
<rect x="5.3" y="292.3" width="3.4" height="3.4" fill="#fff" stroke="#111" stroke-width="1.1"/>
<path d="M7,336 Q10,316 33,310" stroke="#333" stroke-width="1.2" fill="none"/>
<rect x="5.3" y="334.3" width="3.4" height="3.4" fill="#fff" stroke="#111" stroke-width="1.1"/>
<rect x="13.3" y="317.3" width="3.4" height="3.4" fill="#fff" stroke="#111" stroke-width="1.1"/>
<rect x="31.3" y="308.3" width="3.4" height="3.4" fill="#fff" stroke="#111" stroke-width="1.1"/>
<circle cx="20" cy="360" r="14.5" fill="url(#gPage)" stroke="#333" stroke-width="1.2"/><path d="M20,360 L30,350" stroke="#333" stroke-width="1"/>
<rect x="18.3" y="359.3" width="3.4" height="3.4" fill="#fff" stroke="#111" stroke-width="1.1"/>
<path d="M7.5,396 A7.6,7.6 0 0 1 18.5,386.5 A7.4,7.4 0 0 1 31.5,394 A9.8,9.8 0 0 1 27,412.5 A5.6,5.6 0 0 1 18,409.5 A7.8,7.8 0 0 1 7.5,396 Z" fill="url(#gPage)" stroke="#333" stroke-width="1.3"/>
<path d="M5,451 Q8,436 16,436 Q22,437 24,439 Q31,442 35,421" fill="none" stroke="#333" stroke-width="1.4"/>
<ellipse cx="20" cy="476" rx="14.5" ry="9.5" fill="url(#gPage)" stroke="#333" stroke-width="1.2"/>
<rect x="18.3" y="464.8" width="3.4" height="3.4" fill="#fff" stroke="#111" stroke-width="1.1"/>
<rect x="4.3" y="474.8" width="3.4" height="3.4" fill="#fff" stroke="#111" stroke-width="1.1"/>
<rect x="31.8" y="474.8" width="3.4" height="3.4" fill="#fff" stroke="#111" stroke-width="1.1"/>
<path d="M7,514 Q7,504 20,504 Q34,504 34,513 Q34,523 20,523" fill="url(#gPage)" stroke="#333" stroke-width="1.2"/>
<rect x="5.3" y="512.3" width="3.4" height="3.4" fill="#fff" stroke="#111" stroke-width="1.1"/>
<rect x="17.3" y="521.3" width="3.4" height="3.4" fill="#fff" stroke="#111" stroke-width="1.1"/>
<path d="M17.5,537.5 H30 L35,542.5 V558 H17.5 Z" fill="url(#gPage2)" stroke="#333" stroke-width="1.1"/><path d="M30,537.5 V542.5 H35" fill="#fff" stroke="#333" stroke-width="1"/>
<rect x="6.5" y="546.5" width="20" height="13" fill="url(#gPage)" stroke="#333" stroke-width="1.1"/>
<circle cx="25" cy="558" r="6" fill="#f0f0f0" stroke="#333" stroke-width="1.1"/>
<rect x="5.3" y="557.3" width="3.4" height="3.4" fill="#fff" stroke="#111" stroke-width="1.1"/>
<path d="M36,562 V566 H32 Z" fill="#111"/>
<rect x="7.5" y="580.5" width="20" height="13" fill="url(#gPage)" stroke="#333" stroke-width="1.1"/>
<circle cx="27" cy="592" r="6" fill="#f0f0f0" stroke="#333" stroke-width="1.1"/>
<rect x="6.3" y="591.3" width="3.4" height="3.4" fill="#fff" stroke="#111" stroke-width="1.1"/>
<rect x="18.5" y="624.5" width="3" height="3" fill="#fff" stroke="#111" stroke-width="1.1"/>
<rect x="9" y="655" width="22" height="22" fill="url(#hatch)"/><path d="M31,665 V677 H20 Z" fill="#8a8e94"/>
<path d="M5,655.5 H35 M5,677.5 H35 M8.5,651 V681 M31.5,651 V681" stroke="#222" stroke-width="1"/><path d="M20,681 L35,665" stroke="#222" stroke-width="1"/>
<rect x="9" y="692" width="22" height="22" fill="url(#gGrad)"/><path d="M31,702 V714 H20 Z" fill="#8a8e94"/>
<path d="M5,692.5 H35 M5,714.5 H35 M8.5,688 V718 M31.5,688 V718" stroke="#222" stroke-width="1"/><path d="M20,718 L35,702" stroke="#222" stroke-width="1"/>
<path d="M5.5,729.5 H27 L34.5,737 V753.5 H5.5 Z" fill="url(#gPage)" stroke="#333" stroke-width="1.2" stroke-linejoin="round"/><circle cx="20" cy="741.5" r="7" fill="none" stroke="#333" stroke-width="1.2"/>
<rect x="5.5" y="765.5" width="29" height="22" fill="#f4f4f4" stroke="#333" stroke-width="1"/><rect x="5.5" y="765.5" width="29" height="4" fill="#555"/><path d="M5,774 H35 M5,779 H35 M5,784 H35 M12.5,769 V787 M20,769 V787 M27.5,769 V787" stroke="#888" stroke-width="0.8"/>
<path d="M230.5,199.5 H738.5 V708.5 H230.5 Z" fill="none" stroke="#ffffff" stroke-width="1.3"/>
<path d="M256,747 H720" stroke="#8e3848" stroke-width="1.1"/>
<path d="M261,747 H738" stroke="#c42838" stroke-width="2" stroke-dasharray="2 4 2 35"/>
<path d="M237,747 L256,743.5 V750.5 Z" fill="#d02030" opacity="0.9"/>
<path d="M738,747 L720,743.5 V750.5 Z" fill="#c02030" opacity="0.8"/>
<path d="M231,713 V742" stroke="#a03a48" stroke-width="1.2"/>
<path d="M231,753 V762" stroke="#7a4048" stroke-width="1" stroke-dasharray="2 3"/>
<path d="M738.5,713 V742" stroke="#a03a48" stroke-width="1.2"/>
<path d="M787.5,227 V682" stroke="#8e3848" stroke-width="1.1"/>
<path d="M787.5,231 V682" stroke="#c42838" stroke-width="2" stroke-dasharray="2 4 2 35"/>
<path d="M787.5,205 L784.5,227 H790.5 Z" fill="#c82030" opacity="0.85"/>
<path d="M787.5,703 L784.5,682 H790.5 Z" fill="#c82030" opacity="0.85"/>
<path d="M744,199.5 H782" stroke="#c42838" stroke-width="2" stroke-dasharray="2 4"/>
<path d="M744,708.5 H782" stroke="#a03a48" stroke-width="1.6" stroke-dasharray="2 4"/>
<g transform="translate(448,712)"><path d="M19,0 H2 L1,12 Q5,10 10,10 Q19,10 19,19.5 Q19,29 10,29 Q3,29 0,25" fill="none" stroke="#b83040" stroke-width="1.6" stroke-dasharray="2 3.5" stroke-linecap="round" opacity="0.85"/><path d="M10,0 Q0,0 0,14.5 Q0,29 10,29 Q20,29 20,14.5 Q20,0 10,0 Z" transform="translate(25,0)" fill="none" stroke="#b83040" stroke-width="1.6" stroke-dasharray="2 3.5" stroke-linecap="round" opacity="0.85"/><path d="M10,0 Q0,0 0,14.5 Q0,29 10,29 Q20,29 20,14.5 Q20,0 10,0 Z" transform="translate(50,0)" fill="none" stroke="#b83040" stroke-width="1.6" stroke-dasharray="2 3.5" stroke-linecap="round" opacity="0.85"/></g>
<g transform="translate(752,486) rotate(-90)"><path d="M19,0 H2 L1,12 Q5,10 10,10 Q19,10 19,19.5 Q19,29 10,29 Q3,29 0,25" fill="none" stroke="#b83040" stroke-width="1.6" stroke-dasharray="2 3.5" stroke-linecap="round" opacity="0.85"/><path d="M10,0 Q0,0 0,14.5 Q0,29 10,29 Q20,29 20,14.5 Q20,0 10,0 Z" transform="translate(25,0)" fill="none" stroke="#b83040" stroke-width="1.6" stroke-dasharray="2 3.5" stroke-linecap="round" opacity="0.85"/><path d="M10,0 Q0,0 0,14.5 Q0,29 10,29 Q20,29 20,14.5 Q20,0 10,0 Z" transform="translate(50,0)" fill="none" stroke="#b83040" stroke-width="1.6" stroke-dasharray="2 3.5" stroke-linecap="round" opacity="0.85"/></g>
<rect x="733.5" y="194.5" width="10" height="10" fill="#1a8cff" stroke="#12305a" stroke-width="1"/>
<rect x="782.5" y="194.5" width="10" height="10" fill="#1a8cff" stroke="#12305a" stroke-width="1"/>
<rect x="763.5" y="449.5" width="10" height="10" fill="#1a8cff" stroke="#12305a" stroke-width="1"/>
<rect x="733.5" y="703.5" width="10" height="10" fill="#1a8cff" stroke="#12305a" stroke-width="1"/>
<rect x="782.5" y="703.5" width="10" height="10" fill="#1a8cff" stroke="#12305a" stroke-width="1"/>
<rect x="225.5" y="703.5" width="10" height="10" fill="#1a8cff" stroke="#12305a" stroke-width="1"/>
<rect x="225.5" y="742.5" width="10" height="10" fill="#1a8cff" stroke="#12305a" stroke-width="1"/>
<rect x="479.5" y="723.5" width="10" height="10" fill="#1a8cff" stroke="#12305a" stroke-width="1"/>
<rect x="733.5" y="742.5" width="10" height="10" fill="#1a8cff" stroke="#12305a" stroke-width="1"/>
</svg>



<div id="panel" class="a"></div>
<div id="pstrip" class="a"></div>
<div id="pinner" class="a"></div>
<div id="combo" class="a">转角标注 (2)</div>
<div id="btns" class="a"></div>
<div id="scroll" class="a"></div>
<div id="thumb" class="a"></div>
<div id="tbl" class="a">
<div class="row" style="top:212px"><div class="k">文字旋转</div><div class="v">0</div></div>
<div class="row" style="top:233px"><div class="k">文字观察方向</div><div class="v">从左到右</div></div>
<div class="row" style="top:254px"><div class="k">测量单位</div><div class="v">500</div></div>
<div class="row" style="top:275px"><div class="k">文字替代</div><div class="v"></div></div>
<div class="rb" style="top:296px"></div>
<div class="hdr" style="top:300px">调整</div>
<div class="row" style="top:321px"><div class="k">尺寸线强制</div><div class="v">开</div></div>
<div class="row" style="top:342px"><div class="k">尺寸线内</div><div class="v">开</div></div>
<div class="row sel" style="top:363px"><div class="k">标注全局比例</div><div class="v">10</div></div>
<div class="row" style="top:384px"><div class="k">调整</div><div class="v">最佳效果</div></div>
<div class="row" style="top:405px"><div class="k">文字在内</div><div class="v">关</div></div>
<div class="row" style="top:426px"><div class="k">文字移动</div><div class="v">尺寸线随文字移动</div></div>
<div class="rb" style="top:447px"></div>
<div class="hdr" style="top:451px">主单位</div>
<div class="row" style="top:472px"><div class="k">小数分隔符</div><div class="v">,</div></div>
<div class="row" style="top:493px"><div class="k">标注前缀</div><div class="v"></div></div>
<div class="row" style="top:514px"><div class="k">标注后缀</div><div class="v"></div></div>
<div class="row dis" style="top:535px"><div class="k">标注辅单位后缀</div><div class="v"></div></div>
<div class="row" style="top:556px"><div class="k">标注舍入</div><div class="v">0</div></div>
<div class="row" style="top:577px"><div class="k">标注线性比例</div><div class="v">1</div></div>
<div class="row" style="top:598px"><div class="k">标注辅单位比例</div><div class="v">100</div></div>
<div class="row" style="top:619px"><div class="k">标注单位</div><div class="v">小数</div></div>
<div class="row" style="top:640px"><div class="k">消去前导零</div><div class="v">否</div></div>
<div class="row" style="top:661px"><div class="k">消去后续零</div><div class="v">是</div></div>
<div class="row" style="top:682px"><div class="k">消去零英尺</div><div class="v">是</div></div>
<div class="rb" style="top:703px"></div>
</div>

<svg class="a" style="left:0;top:0" width="818" height="786" viewBox="0 0 818 786">
<path d="M361,174 L369,181 M369,174 L361,181" stroke="#111" stroke-width="2.6" stroke-linecap="square"/>
<rect x="356" y="190" width="2" height="11" fill="#111"/><path d="M362.5,191.5 V199.5 L359,195.5 Z M364,191.5 V199.5 L368,195.5 Z" fill="#111"/>
<rect x="358" y="209" width="12" height="2" fill="#111"/><rect x="358" y="212" width="12" height="8" fill="#111"/><rect x="363.5" y="213" width="5.5" height="6" fill="none" stroke="#fff" stroke-width="1"/><path d="M363.5,216 H369" stroke="#fff" stroke-width="1"/>
<rect x="356.5" y="689.5" width="11" height="14" rx="1" fill="#fff" stroke="#222" stroke-width="1"/><rect x="358" y="691" width="6" height="6" fill="#2a5a98"/><rect x="365" y="691" width="1.5" height="6" fill="#aab"/><path d="M359,700 H366 M359,700 L361,698.5 M359,700 L361,701.5" stroke="#222" stroke-width="0.9" fill="none"/>
<path d="M538,192 L541.5,195.5 L545,192" fill="none" stroke="#444" stroke-width="1.1"/>
<rect x="552.5" y="181.5" width="75" height="24" fill="#ededed" stroke="#8a8a8a" stroke-width="1"/><path d="M577.5,181.5 V205.5 M602.5,181.5 V205.5" stroke="#8a8a8a" stroke-width="1"/>
<rect x="557.5" y="186.5" width="15" height="15" fill="none" stroke="#222" stroke-width="1" stroke-dasharray="1 1.2"/>
<rect x="560.5" y="189.5" width="9" height="9" fill="none" stroke="#222" stroke-width="1" stroke-dasharray="1 1.2"/>
<path d="M565,190.5 V198.5 M561,194.5 H569" stroke="#10a020" stroke-width="2.4"/>
<path d="M590,199 A5,5 0 1 1 585,191" fill="none" stroke="#333" stroke-width="1.3"/>
<rect x="586.5" y="187.5" width="7" height="7" rx="1" fill="#a8d088" stroke="#2a5a1a" stroke-width="1"/>
<path d="M591.5,191 V201 L593.5,199 L595.5,203 L597,202.3 L595,198.5 H598 Z" fill="#fff" stroke="#111" stroke-width="0.9" stroke-linejoin="round"/>
<rect x="607.5" y="187.5" width="9" height="12" fill="#a8d088" stroke="#2a5a1a" stroke-width="1.1"/>
<path d="M612,191 V201 L614,199 L616,203 L617.5,202.3 L615.5,198.5 H618.5 Z" fill="#fff" stroke="#111" stroke-width="0.9" stroke-linejoin="round"/>
<path d="M621,187 L617.5,191 H620.5 L618,195 L623.5,190 H620.5 L622.5,187 Z" fill="#f8b020" stroke="#c07000" stroke-width="0.5"/>
<rect x="607" y="364" width="18" height="19" fill="#c8c8c8"/>
<rect x="609.5" y="365.5" width="12" height="16" rx="1" fill="#fafafa" stroke="#333" stroke-width="1"/><rect x="611" y="367" width="9" height="3" fill="#555"/>
<rect x="611" y="372" width="2" height="1.6" fill="#333"/>
<rect x="614" y="372" width="2" height="1.6" fill="#333"/>
<rect x="617" y="372" width="2" height="1.6" fill="#333"/>
<rect x="611" y="375" width="2" height="1.6" fill="#333"/>
<rect x="614" y="375" width="2" height="1.6" fill="#333"/>
<rect x="617" y="375" width="2" height="1.6" fill="#333"/>
<rect x="611" y="378" width="2" height="1.6" fill="#333"/>
<rect x="614" y="378" width="2" height="1.6" fill="#333"/>
<rect x="617" y="378" width="2" height="1.6" fill="#333"/>
</svg>
<div class="a" style="left:350px;top:660px;width:24px;height:12px;transform:rotate(-90deg);transform-origin:12px 6px;font-size:12px;line-height:12px;text-align:center;color:#000;white-space:nowrap;-webkit-text-stroke:0.3px #000">特性</div>

<div id="wm" class="a"><b>头条</b> @阿飞零基础教学</div>
</body></html>
